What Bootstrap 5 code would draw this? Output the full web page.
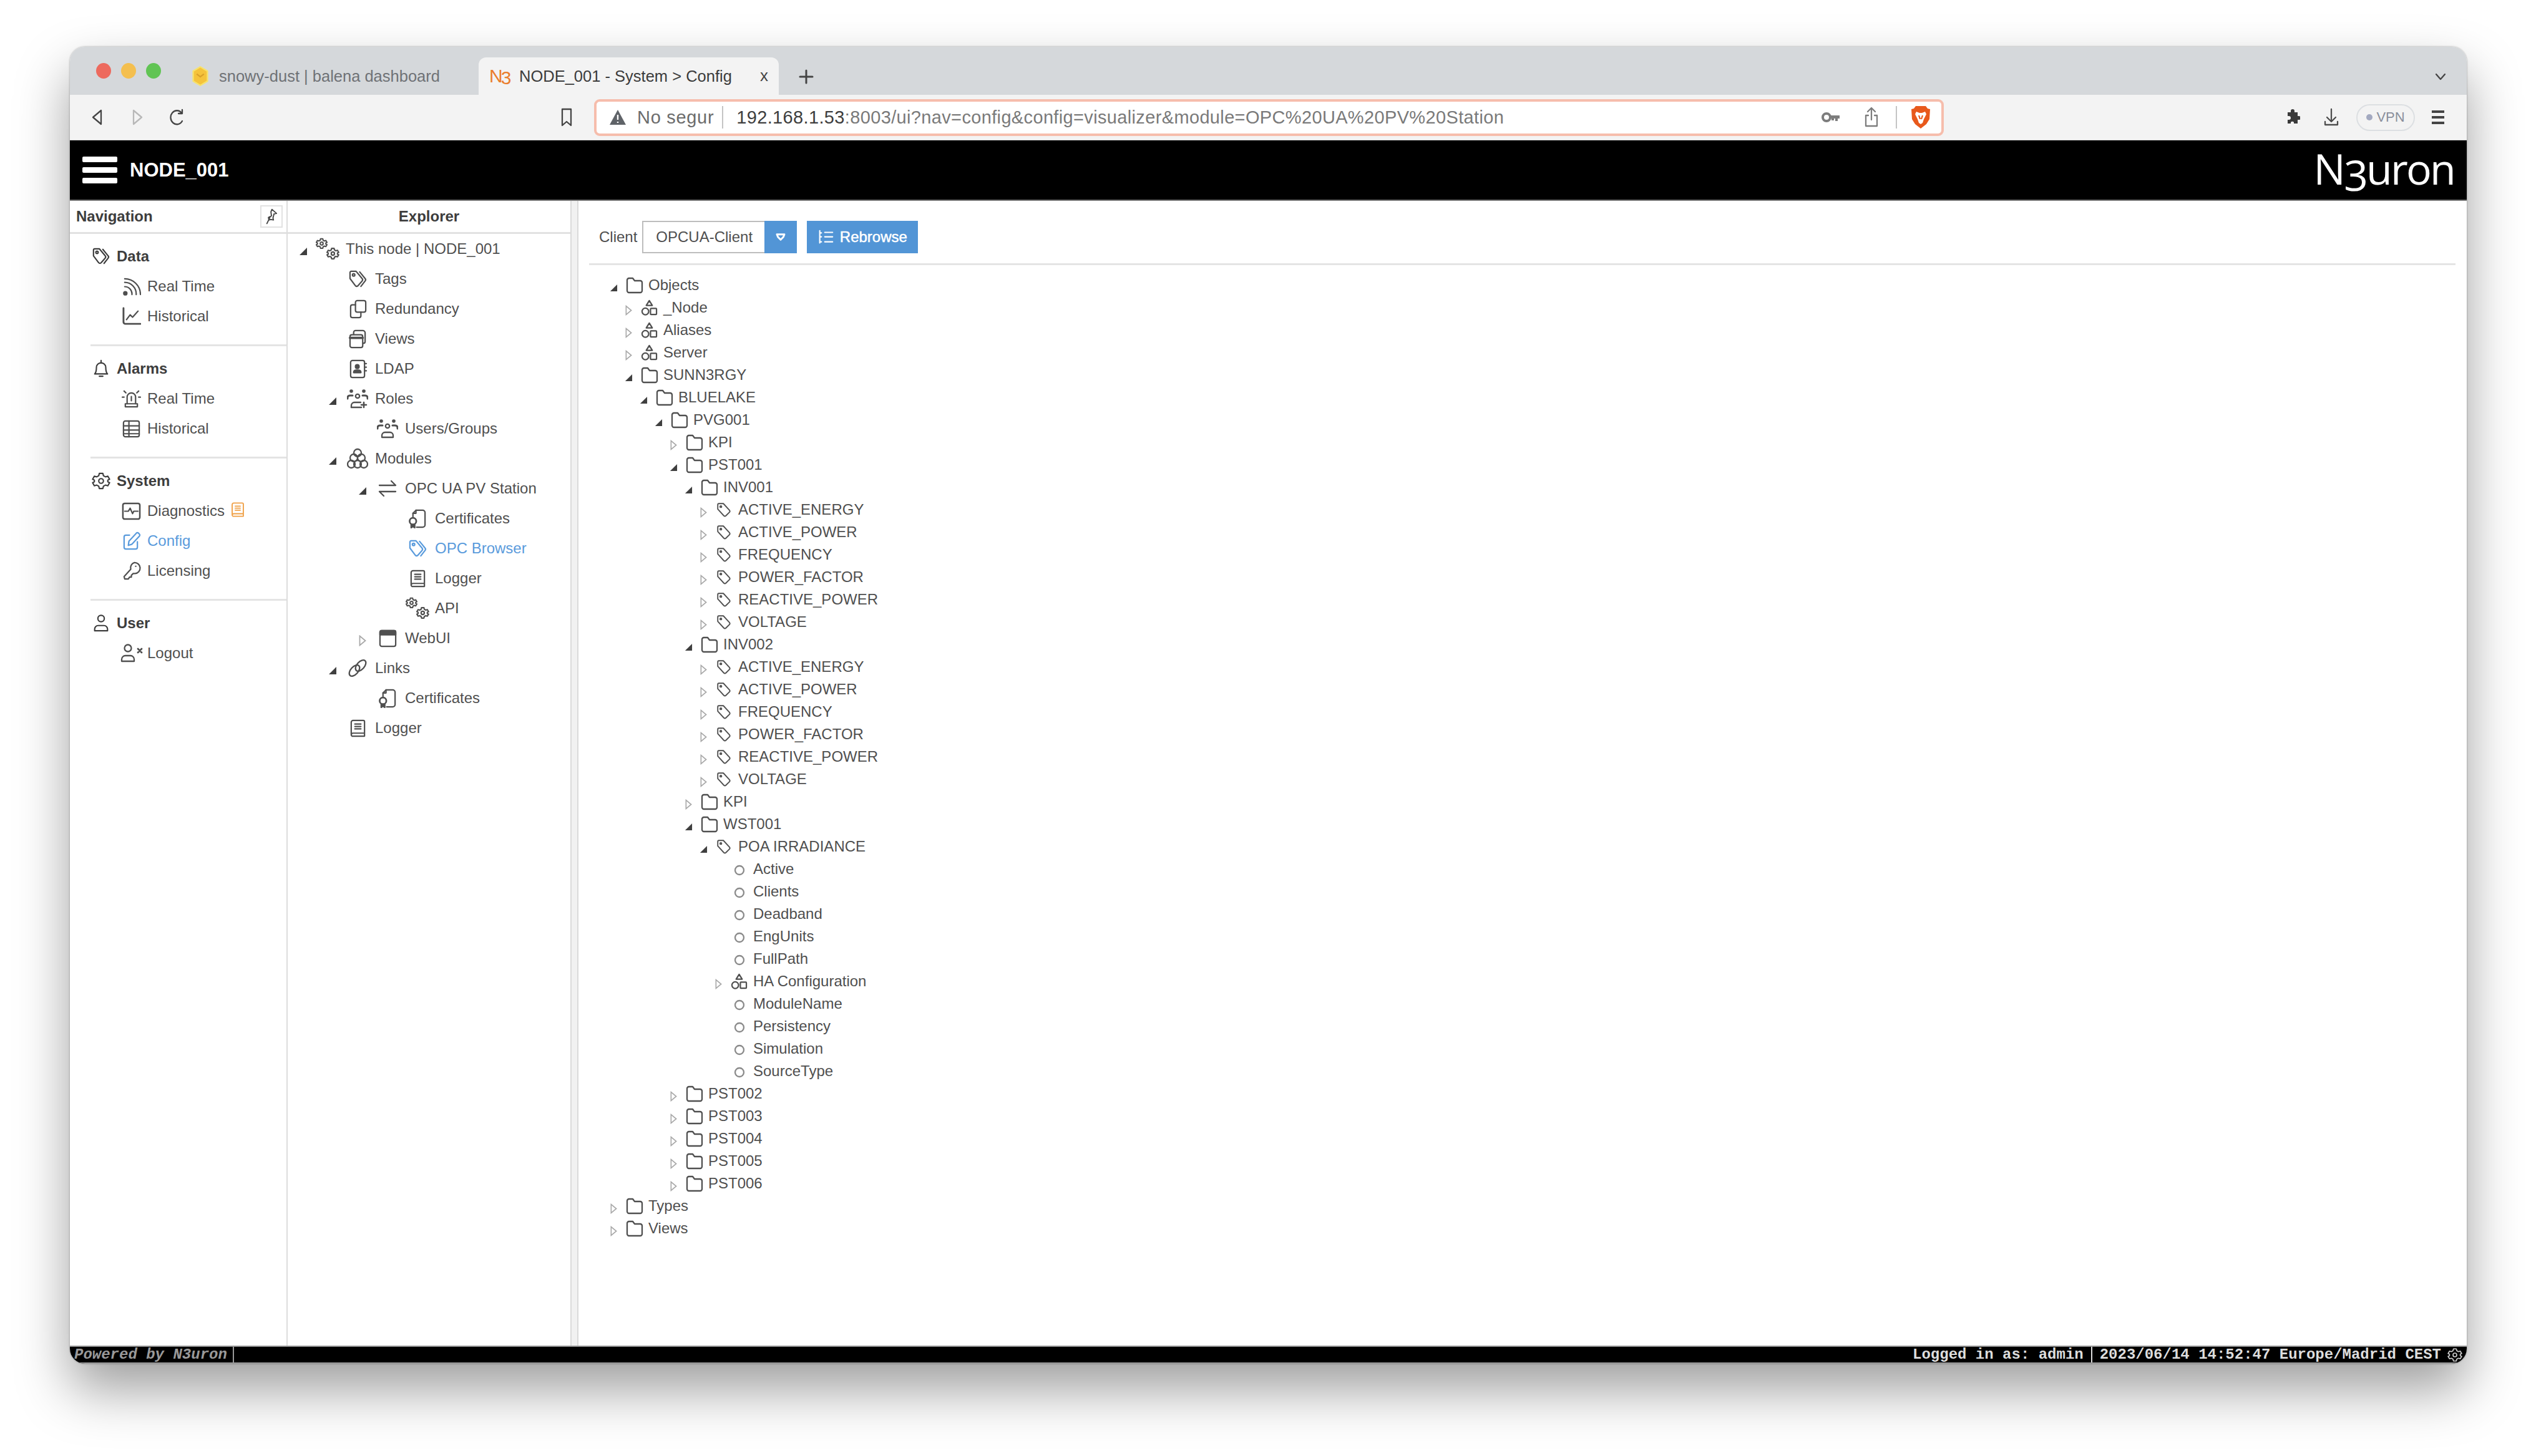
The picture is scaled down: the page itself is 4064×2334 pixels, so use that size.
<!DOCTYPE html>
<html lang="en">
<head>
<meta charset="utf-8">
<title>NODE_001 - System &gt; Config</title>
<link href="https://cdn.jsdelivr.net/npm/bootstrap@5.3.0/dist/css/bootstrap.min.css" rel="stylesheet">
<style>
html,body{height:100%;background:#fff;overflow:hidden}
body{font-family:"Liberation Sans",Arial,sans-serif;font-size:24px;color:#4f4f4f;line-height:1.2}
svg{display:block;flex:none}
.ic{fill:none;stroke:currentColor;stroke-width:2.3;stroke-linecap:round;stroke-linejoin:round}
.winbox{margin:75px 0 0 112px;width:3841px;height:2111px;border-radius:24px;overflow:hidden;background:#fff;box-shadow:0 42px 85px rgba(0,0,0,.38),0 0 3px rgba(0,0,0,.35)}
/* browser chrome */
.tabstrip{height:77px;background:#d5d8db}
.light{width:24px;height:25px;border-radius:50%}
.lights{margin:0 32px 0 42px;gap:16px;align-self:center}
.tabx{height:60px;font-size:25.5px}
.tab-off{width:477px;padding-left:17px;color:#6f7276}
.tab-on{width:481px;padding:0 17px;background:#f3f3f3;border-radius:12px 12px 0 0;color:#3c3c3c}
.fav3{width:31px;margin-right:17px;color:#ea7d2c;font-size:30px;letter-spacing:-3px;line-height:1}
.fav3 b{font-weight:400;position:relative;top:3px}
.tabclose{font-size:26px;color:#444}
.plusico{margin:18px 0 0 32px;align-self:center;color:#444}
.chev{margin:18px 33px 0 auto;align-self:center;color:#444}
.toolbar-row{height:73px;background:#f3f3f3;border-bottom:1px solid #dcdcdc}
.tbi{width:24px;color:#444}
.tb-back{margin-left:32px}.tb-fwd{margin-left:40px;color:#b8b8b8}.tb-rel{margin-left:40px}.tb-mark{margin-left:600px}
.urlbox{margin-left:32px;width:2163px;height:59px;border:4px solid #f6bdac;border-radius:9px;background:#fff;font-size:29px;padding-left:20px;padding-right:17px}
.nosec{color:#6c6c6c;margin-left:17px;font-size:29px;letter-spacing:.7px;padding-right:13px;border-right:2px solid #c4c4c4;line-height:36px}
.urltxt{margin-left:21px;color:#7a7a7a;letter-spacing:.35px}
.urltxt b{font-weight:400;color:#3e3e3e}
.urlend{margin-left:auto;color:#7d7d7d}
.u-share{margin-left:38px}.urlsep{width:2px;height:36px;background:#c4c4c4;margin:0 22px 0 27px}
.tb-puzzle{margin-left:547px;color:#3a3a3a}.tb-dl{margin-left:38px;color:#4d4d4d}
.vpnpill{margin-left:28px;width:94px;height:43px;border:2px solid #dcdfe2;border-radius:22px;font-size:22px;color:#8a8f9c;gap:6px}
.vpndot{width:10px;height:10px;background:#a3a9c0;border-radius:50%}
.tb-menu{margin-left:25px;color:#444}
/* app */
.topbar{height:97px;background:#000;color:#fff;border-bottom:2px solid #777;padding:0 20px 0 20px}
.burger{width:56px;gap:8px;margin-right:20px}
.burger i{display:block;height:9px;background:#fff;border-radius:2px}
.nodename{font-size:31px;font-weight:700}
.logotxt{margin-left:auto;font-family:"Open Sans",sans-serif;font-size:68px;font-weight:500;letter-spacing:-2.8px;line-height:1;padding-bottom:6px}
.logotxt b{font-weight:500;position:relative;top:10px}
.appbody{flex:1;min-height:0}
.navside{width:349px;border-right:2px solid #ddd}
.expside{width:453px}
.gutter{width:13px;background:#f1f1f1;border-left:2px solid #dadada;border-right:2px solid #dadada}
.panelhd{height:53px;border-bottom:3px solid #e2e2e2;font-weight:700;color:#3d3d3d;padding-left:10px}
.pinbtn{width:36px;height:36px;border:2px solid #e2e2e2;margin:0 6px 0 auto;color:#444}
.navgrp{padding:12px 0 21px 35px}
.navgrp+.navgrp{border-top:3px solid #e4e4e4;margin-left:33px;padding-left:2px}
.nrow{height:48px;gap:10px}
.nrow.ghead{font-weight:700;color:#3d3d3d}
.nrow.nsub{padding-left:48px}
.hl{color:#5a9bdc}
.bookmini{color:#f0a046;margin-left:-2px;margin-bottom:4px}
.logout-ico{margin-left:-3px;margin-right:-3px}
.erow{height:48px}
.l0{padding-left:13px}.l1{padding-left:60px}.l2{padding-left:108px}.l3{padding-left:156px}
.arw{width:24px;margin-right:8px}
.eico{width:40px;margin-right:8px}
.mainpane{min-width:0}
.clientbar{height:52px;margin:32px 18px 0 33px;gap:8px}
.selbox{width:248px;height:52px;border:2px solid #bdbdbd;border-right:0}
.selbox span{padding-left:20px}
.selbtn{width:52px;height:52px;margin-left:auto;margin-right:0;background:#5295d6;color:#fff}
.rebrowse{--bs-btn-bg:#5295d6;--bs-btn-border-color:#5295d6;--bs-btn-padding-x:0;--bs-btn-padding-y:0;--bs-btn-font-size:24px;--bs-btn-border-radius:0;--bs-btn-color:#fff;width:178px;height:52px;margin-left:8px;gap:10px;-webkit-text-stroke:.5px #fff}
.thr{height:0;border-top:3px solid #e4e4e4;margin:16px 18px 0 17px}
.mtree{padding:14px 0 0 44px}
.mrow{height:36px}
.m0{padding-left:0}.m1{padding-left:24px}.m2{padding-left:48px}.m3{padding-left:72px}.m4{padding-left:96px}.m5{padding-left:120px}.m6{padding-left:144px}.m7{padding-left:168px}
.marw{width:24px;margin-right:8px}
.mico{width:28px;margin-right:8px}
.mrow svg.tri,.erow svg.tri{margin-top:8px}
.tri{margin:auto}
.statusbar{height:29px;background:#000;border-top:2px solid #999;border-bottom:2px solid #999;font-family:"Liberation Mono","Courier New",monospace;font-size:24px;font-weight:700;color:#ddd;line-height:1;white-space:pre}
.st-pow{width:263px;padding-left:7px;font-style:italic;color:#999;border-right:2px solid #999;height:100%}
.st-log{margin-left:auto;padding-right:12px;border-right:2px solid #ddd;height:100%}
.st-date{padding-left:12px;height:100%}
.st-gear{margin:0 7px 0 10px;color:#ccc}
</style>
</head>
<body>
<svg width="0" height="0" class="position-absolute">
<defs>
<path id="gearp" d="M13 3h6l1 4 3.5 2 4-1.2 3 5.2-3 1.5v3l3 1.5-3 5.2-4-1.2-3.5 2-1 4h-6l-1-4-3.5-2-4 1.2-3-5.2 3-1.5v-3l-3-1.5 3-5.2 4 1.2 3.5-2z"/>
</defs>
<symbol id="i-tags" viewBox="0 0 32 32"><path d="M3 5a2 2 0 0 1 2-2h8l10 12a3 3 0 0 1 0 4l-7 8a3 3 0 0 1-4 0L3 15z"/><circle cx="9" cy="9" r="2"/><path d="M19 4l9 11a3 3 0 0 1 0 4l-7 9"/></symbol>
<symbol id="i-tag" viewBox="0 0 32 32"><path d="M4 6a2 2 0 0 1 2-2h9l12 13a3 3 0 0 1 0 4l-7 7a3 3 0 0 1-4 0L4 15z"/><circle cx="10" cy="10" r="1.6"/></symbol>
<symbol id="i-rss" viewBox="0 0 32 32"><circle cx="6" cy="27" r="2.6" fill="currentColor"/><path d="M5 16a12 12 0 0 1 12 13M5 9a19 19 0 0 1 19 20M5 3a26 26 0 0 1 26 26"/></symbol>
<symbol id="i-chart" viewBox="0 0 32 32"><path d="M3 2v23a3 3 0 0 0 3 3h25" stroke-width="3"/><path d="M8 21l6-8 4 4 9-10"/></symbol>
<symbol id="i-bell" viewBox="0 0 32 32"><path d="M5 25c2-2 3-5 3-11a8 8 0 0 1 16 0c0 6 1 9 3 11z"/><path d="M16 2v4M13 29h6"/></symbol>
<symbol id="i-siren" viewBox="0 0 32 32"><path d="M9 24V13a7 7 0 0 1 14 0v11"/><path d="M6 24h20v5H6z"/><path d="M16 12v7M1 13h3M28 13h3M4 3l3 3M28 3l-3 3"/></symbol>
<symbol id="i-table" viewBox="0 0 32 32"><rect x="3" y="3" width="26" height="26" rx="3"/><path d="M3 11h26M3 18h26M3 24h26M12 3v26"/></symbol>
<symbol id="i-gear" viewBox="0 0 32 32"><use href="#gearp"/><circle cx="16" cy="16" r="4"/></symbol>
<symbol id="i-gears" viewBox="0 0 40 38"><g transform="translate(0 0) scale(.62)"><use href="#gearp" stroke-width="3.6"/><circle cx="16" cy="16" r="4" stroke-width="3.6"/></g><g transform="translate(18 16) scale(.68)"><use href="#gearp" stroke-width="3.4"/><circle cx="16" cy="16" r="4" stroke-width="3.4"/></g></symbol>
<symbol id="i-pulse" viewBox="0 0 32 32"><rect x="2" y="3" width="28" height="26" rx="3" stroke-width="2.6"/><path d="M5 16h6l3-5 4 9 2-4h7"/></symbol>
<symbol id="i-edit" viewBox="0 0 32 32"><path d="M13 6H7a3 3 0 0 0-3 3v17a3 3 0 0 0 3 3h16a3 3 0 0 0 3-3V17"/><path d="M11 23l1-7L24 3a2.5 2.5 0 0 1 4 0l1 1a2.5 2.5 0 0 1 0 4L17 21z"/></symbol>
<symbol id="i-key" viewBox="0 0 32 32"><path d="M21 2a9 9 0 0 1 1 18l-3 0-3 3v3l-3 0-2 3H5l-1-4 11-12A9 9 0 0 1 21 2z"/><path d="M23 8h.5"/></symbol>
<symbol id="i-user" viewBox="0 0 32 32"><circle cx="16" cy="8" r="5.5"/><path d="M5 29v-3a6 6 0 0 1 6-6h10a6 6 0 0 1 6 6v3z"/></symbol>
<symbol id="i-logout" viewBox="0 0 37 32"><circle cx="13" cy="8" r="5.5"/><path d="M3 29v-3a6 6 0 0 1 6-6h8a6 6 0 0 1 6 6v3z"/><path d="M29 9l6 6M35 9l-6 6" stroke-width="2.8"/></symbol>
<symbol id="i-book" viewBox="0 0 32 32"><path d="M5 26V6a3 3 0 0 1 3-3h17a2 2 0 0 1 2 2v19H8a3 3 0 0 0-3 3 2.5 2.5 0 0 0 3 2h19v-6"/><path d="M11 9h10M11 13h10M11 17h10"/></symbol>
<symbol id="i-copy" viewBox="0 0 32 32"><rect x="12" y="2" width="17" height="19" rx="3"/><path d="M12 9H7a3 3 0 0 0-3 3v15a3 3 0 0 0 3 3h11a3 3 0 0 0 3-3v-6"/></symbol>
<symbol id="i-views" viewBox="0 0 32 32"><rect x="3" y="9" width="21" height="21" rx="3"/><path d="M3 14h21" stroke-width="4"/><path d="M9 8V5a3 3 0 0 1 3-3h12a4 4 0 0 1 4 4v14a3 3 0 0 1-3 3"/></symbol>
<symbol id="i-ldap" viewBox="0 0 32 32"><rect x="4" y="2" width="23" height="28" rx="3"/><circle cx="15" cy="12" r="3" fill="currentColor"/><path d="M9 22h12v-1a4 4 0 0 0-4-3h-4a4 4 0 0 0-4 3z" fill="currentColor"/><path d="M27 7h3M27 13h3M27 19h3"/></symbol>
<symbol id="i-roles" viewBox="0 0 34 32"><circle cx="7" cy="4" r="2.8" fill="currentColor" stroke="none"/><circle cx="27" cy="4" r="2.8" fill="currentColor" stroke="none"/><circle cx="17" cy="12" r="3.2"/><path d="M1 16v-2a4 4 0 0 1 4-3h4M33 16v-2a4 4 0 0 0-4-3h-4" stroke-width="3"/><path d="M7 30v-3a5 5 0 0 1 5-5h10"/><path d="M7 30h16M27 22v8M23 26h8" stroke-width="2.6"/></symbol>
<symbol id="i-users" viewBox="0 0 34 32"><circle cx="7" cy="4" r="2.8" fill="currentColor" stroke="none"/><circle cx="27" cy="4" r="2.8" fill="currentColor" stroke="none"/><circle cx="17" cy="12" r="3.2"/><path d="M1 16v-2a4 4 0 0 1 4-3h4M33 16v-2a4 4 0 0 0-4-3h-4" stroke-width="3"/><path d="M8 30v-3a5 5 0 0 1 5-5h8a5 5 0 0 1 5 5v3z"/></symbol>
<symbol id="i-modules" viewBox="0 0 34 34"><circle cx="17" cy="8" r="6"/><circle cx="11" cy="16" r="6"/><circle cx="23" cy="16" r="6"/><circle cx="7" cy="26" r="6"/><circle cx="17" cy="26" r="6"/><circle cx="27" cy="26" r="6"/></symbol>
<symbol id="i-swap" viewBox="0 0 32 32"><path d="M3 11h26l-7-7M29 21H3l7 7"/></symbol>
<symbol id="i-cert" viewBox="0 0 32 32"><path d="M8 13V7l5-5h11a4 4 0 0 1 4 4v20a4 4 0 0 1-4 4H14"/><path d="M13 2v5H8"/><circle cx="8" cy="20" r="5.5" stroke-width="2.8"/><path d="M5 25v6l3-2 3 2v-6" fill="currentColor"/></symbol>
<symbol id="i-window" viewBox="0 0 32 32"><rect x="3" y="3" width="26" height="26" rx="3"/><path d="M3 5a2 2 0 0 1 2-2h22a2 2 0 0 1 2 2v5H3z" fill="currentColor"/></symbol>
<symbol id="i-link" viewBox="0 0 34 32"><ellipse cx="12" cy="20" rx="10.5" ry="6" transform="rotate(-48 12 20)"/><ellipse cx="22" cy="12" rx="10.5" ry="6" transform="rotate(-48 22 12)"/></symbol>
<symbol id="i-folder" viewBox="0 0 28 28"><path d="M2 6a3 3 0 0 1 3-3h6l3 4h9a3 3 0 0 1 3 3v13a3 3 0 0 1-3 3H5a3 3 0 0 1-3-3z"/></symbol>
<symbol id="i-shapes" viewBox="0 0 28 28"><path d="M14 2l5 8H9z"/><circle cx="7.5" cy="20" r="5.5"/><rect x="16" y="15" width="10" height="10" rx="1"/></symbol>
<symbol id="i-pin" viewBox="0 0 24 32"><path d="M13 2l9 8-5 1-2 8 1 4-5-1-4 1-1-5 6-3-1-8z"/><path d="M9 18l-6 12"/></symbol>
<symbol id="i-list" viewBox="0 0 28 28"><path d="M3 2v22M3 6h3M3 13h3M3 22h3M12 5h14M12 13h14M12 22h14" stroke-width="2.4"/></symbol>
<symbol id="i-caret" viewBox="0 0 18 14"><path d="M2 2h14l-2 5-5 5-5-5z" stroke-width="3.4"/></symbol>
<symbol id="i-open" viewBox="0 0 14 14"><path d="M13 1v12H1z" fill="#3f3f3f"/></symbol>
<symbol id="i-closed" viewBox="0 0 12 18"><path d="M1.5 1.5v15l9-7.5z" fill="none" stroke="#a8a8a8" stroke-width="1.8"/></symbol>
</svg>

<div class="winbox d-flex flex-column">
  <div class="tabstrip d-flex align-items-end">
    <div class="lights d-flex">
      <span class="light" style="background:#ed6a5e"></span><span class="light" style="background:#f4bf4f"></span><span class="light" style="background:#61c454"></span>
    </div>
    <div class="tabx tab-off d-flex align-items-center">
      <svg width="28" height="32" viewBox="0 0 22 28" class="me-3"><path d="M11 1l10 6v14l-10 6-10-6V7z" fill="#f5c33b" stroke="#f7e26b" stroke-width="2"/><path d="M6 11l5 4 5-4" fill="none" stroke="#d9a12a" stroke-width="2"/></svg>
      <span class="text-nowrap">snowy-dust | balena dashboard</span>
    </div>
    <div class="tabx tab-on d-flex align-items-center">
      <span class="fav3">N<b>3</b></span>
      <span class="text-nowrap">NODE_001 - System &gt; Config</span>
      <span class="tabclose ms-auto">x</span>
    </div>
    <svg class="plusico ic" width="24" height="24" viewBox="0 0 24 24"><path d="M12 2v20M2 12h20" stroke-width="3"/></svg>
    <svg class="chev ic" width="18" height="12" viewBox="0 0 18 12"><path d="M2 2l7 8 7-8"/></svg>
  </div>

  <div class="toolbar-row d-flex align-items-center">
    <svg class="tbi tb-back ic" height="26" viewBox="0 0 24 26"><path d="M18 2v22L5 13z"/></svg>
    <svg class="tbi tb-fwd ic" height="26" viewBox="0 0 24 26"><path d="M6 2v22l13-11z"/></svg>
    <svg class="tbi tb-rel ic" height="28" viewBox="0 0 24 28"><path d="M20 20a10 11 0 1 1-1-13M20 2v6h-6"/></svg>
    <svg class="tbi tb-mark ic" height="30" viewBox="0 0 24 30"><path d="M5 2h14v26l-7-6-7 6z"/></svg>
    <div class="urlbox d-flex align-items-center">
      <svg width="28" height="26" viewBox="0 0 28 26"><path d="M14 1l13 24H1z" fill="#5f6368"/><path d="M14 9v8M14 20v2" stroke="#fff" stroke-width="2.4"/></svg>
      <span class="nosec text-nowrap">No segur</span>
      <span class="urltxt text-nowrap"><b>192.168.1.53</b>:8003/ui?nav=config&amp;config=visualizer&amp;module=OPC%20UA%20PV%20Station</span>
      <div class="urlend d-flex align-items-center">
        <svg width="30" height="18" viewBox="0 0 30 18"><circle cx="8" cy="9" r="6" fill="none" stroke="currentColor" stroke-width="4"/><path d="M13 6h16v5h-3v4h-4v-4h-2v3h-4v-3h-3z" fill="currentColor"/></svg>
        <svg class="ic u-share" width="24" height="32" viewBox="0 0 24 32"><path d="M12 1v19M6 7l6-6 6 6M7 13H3v17h18V13h-4"/></svg>
        <span class="urlsep"></span>
        <svg width="32" height="38" viewBox="0 0 32 38"><path d="M8 1h16l3 4 4 1-1 16-5 8-9 7-9-7-5-8L1 6l4-1z" fill="#e8591c"/><path d="M9 10l5 2h4l5-2 2 4-4 8-2 6-3 2-3-2-2-6-4-8z" fill="#fff"/><path d="M13 16l2 6M19 16l-2 6" stroke="#e8591c" stroke-width="2.2"/></svg>
      </div>
    </div>
    <svg class="tbi tb-puzzle" height="34" viewBox="0 0 24 26"><path d="M9 3a3 3 0 0 1 6 0v2h5v6h2a3 3 0 0 1 0 6h-2v6h-6v-2a3 3 0 0 0-5 0v2H4v-6h2a3 3 0 0 0 0-6H4V5h5z" fill="currentColor"/></svg>
    <svg class="tbi tb-dl ic" height="30" viewBox="0 0 24 30"><path d="M12 2v20M5 15l7 7 7-7M2 22v5h20v-5"/></svg>
    <div class="vpnpill d-flex align-items-center justify-content-center"><span class="vpndot"></span><span>VPN</span></div>
    <svg class="tbi tb-menu" height="24" viewBox="0 0 24 24"><path d="M2 3h20M2 12h20M2 21h20" stroke="currentColor" stroke-width="4"/></svg>
  </div>

  <nav class="topbar navbar flex-nowrap justify-content-start align-items-center">
    <div class="burger d-flex flex-column"><i></i><i></i><i></i></div>
    <span class="nodename">NODE_001</span>
    <span class="logotxt">N<b>3</b>uron</span>
  </nav>

  <div class="appbody d-flex">
    <aside class="navside">
      <div class="panelhd d-flex align-items-center">Navigation
        <span class="pinbtn d-flex align-items-center justify-content-center"><svg class="ic" width="20" height="26"><use href="#i-pin"/></svg></span>
      </div>
      <div class="navgrp">
        <div class="nrow ghead d-flex align-items-center"><svg class="ic" width="30" height="30"><use href="#i-tags"/></svg>Data</div>
        <div class="nrow nsub d-flex align-items-center"><svg class="ic" width="31" height="31"><use href="#i-rss"/></svg>Real Time</div>
        <div class="nrow nsub d-flex align-items-center"><svg class="ic" width="31" height="31"><use href="#i-chart"/></svg>Historical</div>
      </div>
      <div class="navgrp">
        <div class="nrow ghead d-flex align-items-center"><svg class="ic" width="30" height="30"><use href="#i-bell"/></svg>Alarms</div>
        <div class="nrow nsub d-flex align-items-center"><svg class="ic" width="31" height="31"><use href="#i-siren"/></svg>Real Time</div>
        <div class="nrow nsub d-flex align-items-center"><svg class="ic" width="31" height="31"><use href="#i-table"/></svg>Historical</div>
      </div>
      <div class="navgrp">
        <div class="nrow ghead d-flex align-items-center"><svg class="ic" width="30" height="30"><use href="#i-gear"/></svg>System</div>
        <div class="nrow nsub d-flex align-items-center"><svg class="ic" width="31" height="31"><use href="#i-pulse"/></svg>Diagnostics<svg class="ic bookmini" width="26" height="30"><use href="#i-book"/></svg></div>
        <div class="nrow nsub hl d-flex align-items-center"><svg class="ic" width="31" height="31"><use href="#i-edit"/></svg>Config</div>
        <div class="nrow nsub d-flex align-items-center"><svg class="ic" width="31" height="31"><use href="#i-key"/></svg>Licensing</div>
      </div>
      <div class="navgrp">
        <div class="nrow ghead d-flex align-items-center"><svg class="ic" width="30" height="30"><use href="#i-user"/></svg>User</div>
        <div class="nrow nsub d-flex align-items-center"><svg class="ic logout-ico" width="37" height="32"><use href="#i-logout"/></svg>Logout</div>
      </div>
    </aside>

    <aside class="expside">
      <div class="panelhd d-flex align-items-center justify-content-center p-0">Explorer</div>
      <div>
        <div class="erow l0 d-flex align-items-center"><span class="arw d-flex"><svg class="tri" width="14" height="14"><use href="#i-open"/></svg></span><span class="eico d-flex"><svg class="ic" width="38" height="36"><use href="#i-gears"/></svg></span>This node | NODE_001</div>
        <div class="erow l1 d-flex align-items-center"><span class="arw"></span><span class="eico d-flex justify-content-center"><svg class="ic" width="31" height="31"><use href="#i-tags"/></svg></span>Tags</div>
        <div class="erow l1 d-flex align-items-center"><span class="arw"></span><span class="eico d-flex justify-content-center"><svg class="ic" width="31" height="31"><use href="#i-copy"/></svg></span>Redundancy</div>
        <div class="erow l1 d-flex align-items-center"><span class="arw"></span><span class="eico d-flex justify-content-center"><svg class="ic" width="31" height="31"><use href="#i-views"/></svg></span>Views</div>
        <div class="erow l1 d-flex align-items-center"><span class="arw"></span><span class="eico d-flex justify-content-center"><svg class="ic" width="31" height="31"><use href="#i-ldap"/></svg></span>LDAP</div>
        <div class="erow l1 d-flex align-items-center"><span class="arw d-flex"><svg class="tri" width="14" height="14"><use href="#i-open"/></svg></span><span class="eico d-flex justify-content-center"><svg class="ic" width="34" height="32"><use href="#i-roles"/></svg></span>Roles</div>
        <div class="erow l2 d-flex align-items-center"><span class="arw"></span><span class="eico d-flex justify-content-center"><svg class="ic" width="34" height="32"><use href="#i-users"/></svg></span>Users/Groups</div>
        <div class="erow l1 d-flex align-items-center"><span class="arw d-flex"><svg class="tri" width="14" height="14"><use href="#i-open"/></svg></span><span class="eico d-flex justify-content-center"><svg class="ic" width="34" height="34"><use href="#i-modules"/></svg></span>Modules</div>
        <div class="erow l2 d-flex align-items-center"><span class="arw d-flex"><svg class="tri" width="14" height="14"><use href="#i-open"/></svg></span><span class="eico d-flex justify-content-center"><svg class="ic" width="32" height="32"><use href="#i-swap"/></svg></span>OPC UA PV Station</div>
        <div class="erow l3 d-flex align-items-center"><span class="arw"></span><span class="eico d-flex justify-content-center"><svg class="ic" width="31" height="31"><use href="#i-cert"/></svg></span>Certificates</div>
        <div class="erow l3 hl d-flex align-items-center"><span class="arw"></span><span class="eico d-flex justify-content-center"><svg class="ic" width="31" height="31"><use href="#i-tags"/></svg></span>OPC Browser</div>
        <div class="erow l3 d-flex align-items-center"><span class="arw"></span><span class="eico d-flex justify-content-center"><svg class="ic" width="31" height="31"><use href="#i-book"/></svg></span>Logger</div>
        <div class="erow l3 d-flex align-items-center"><span class="arw"></span><span class="eico d-flex justify-content-center"><svg class="ic" width="38" height="36"><use href="#i-gears"/></svg></span>API</div>
        <div class="erow l2 d-flex align-items-center"><span class="arw d-flex"><svg class="tri" width="12" height="18"><use href="#i-closed"/></svg></span><span class="eico d-flex justify-content-center"><svg class="ic" width="31" height="31"><use href="#i-window"/></svg></span>WebUI</div>
        <div class="erow l1 d-flex align-items-center"><span class="arw d-flex"><svg class="tri" width="14" height="14"><use href="#i-open"/></svg></span><span class="eico d-flex justify-content-center"><svg class="ic" width="34" height="32"><use href="#i-link"/></svg></span>Links</div>
        <div class="erow l2 d-flex align-items-center"><span class="arw"></span><span class="eico d-flex justify-content-center"><svg class="ic" width="31" height="31"><use href="#i-cert"/></svg></span>Certificates</div>
        <div class="erow l1 d-flex align-items-center"><span class="arw"></span><span class="eico d-flex justify-content-center"><svg class="ic" width="31" height="31"><use href="#i-book"/></svg></span>Logger</div>
      </div>
    </aside>
    <div class="gutter"></div>

    <main class="mainpane flex-grow-1">
      <div class="clientbar d-flex align-items-center">
        <span>Client</span>
        <div class="selbox d-flex align-items-center"><span>OPCUA-Client</span><span class="selbtn d-flex align-items-center justify-content-center p-0"><svg class="ic" width="16" height="12"><use href="#i-caret"/></svg></span></div>
        <button type="button" class="btn rebrowse d-flex align-items-center justify-content-center"><svg class="ic" width="25" height="25"><use href="#i-list"/></svg>Rebrowse</button>
      </div>
      <div class="thr"></div>
      <div class="mtree">
        <div class="mrow m0 d-flex align-items-center"><span class="marw d-flex"><svg class="tri" width="13" height="13"><use href="#i-open"/></svg></span><span class="mico d-flex"><svg class="ic" width="28" height="28"><use href="#i-folder"/></svg></span>Objects</div>
        <div class="mrow m1 d-flex align-items-center"><span class="marw d-flex"><svg class="tri" width="11" height="17"><use href="#i-closed"/></svg></span><span class="mico d-flex"><svg class="ic" width="27" height="27"><use href="#i-shapes"/></svg></span>_Node</div>
        <div class="mrow m1 d-flex align-items-center"><span class="marw d-flex"><svg class="tri" width="11" height="17"><use href="#i-closed"/></svg></span><span class="mico d-flex"><svg class="ic" width="27" height="27"><use href="#i-shapes"/></svg></span>Aliases</div>
        <div class="mrow m1 d-flex align-items-center"><span class="marw d-flex"><svg class="tri" width="11" height="17"><use href="#i-closed"/></svg></span><span class="mico d-flex"><svg class="ic" width="27" height="27"><use href="#i-shapes"/></svg></span>Server</div>
        <div class="mrow m1 d-flex align-items-center"><span class="marw d-flex"><svg class="tri" width="13" height="13"><use href="#i-open"/></svg></span><span class="mico d-flex"><svg class="ic" width="28" height="28"><use href="#i-folder"/></svg></span>SUNN3RGY</div>
        <div class="mrow m2 d-flex align-items-center"><span class="marw d-flex"><svg class="tri" width="13" height="13"><use href="#i-open"/></svg></span><span class="mico d-flex"><svg class="ic" width="28" height="28"><use href="#i-folder"/></svg></span>BLUELAKE</div>
        <div class="mrow m3 d-flex align-items-center"><span class="marw d-flex"><svg class="tri" width="13" height="13"><use href="#i-open"/></svg></span><span class="mico d-flex"><svg class="ic" width="28" height="28"><use href="#i-folder"/></svg></span>PVG001</div>
        <div class="mrow m4 d-flex align-items-center"><span class="marw d-flex"><svg class="tri" width="11" height="17"><use href="#i-closed"/></svg></span><span class="mico d-flex"><svg class="ic" width="28" height="28"><use href="#i-folder"/></svg></span>KPI</div>
        <div class="mrow m4 d-flex align-items-center"><span class="marw d-flex"><svg class="tri" width="13" height="13"><use href="#i-open"/></svg></span><span class="mico d-flex"><svg class="ic" width="28" height="28"><use href="#i-folder"/></svg></span>PST001</div>
        <div class="mrow m5 d-flex align-items-center"><span class="marw d-flex"><svg class="tri" width="13" height="13"><use href="#i-open"/></svg></span><span class="mico d-flex"><svg class="ic" width="28" height="28"><use href="#i-folder"/></svg></span>INV001</div>
        <div class="mrow m6 d-flex align-items-center"><span class="marw d-flex"><svg class="tri" width="11" height="17"><use href="#i-closed"/></svg></span><span class="mico d-flex"><svg class="ic" width="26" height="26"><use href="#i-tag"/></svg></span>ACTIVE_ENERGY</div>
        <div class="mrow m6 d-flex align-items-center"><span class="marw d-flex"><svg class="tri" width="11" height="17"><use href="#i-closed"/></svg></span><span class="mico d-flex"><svg class="ic" width="26" height="26"><use href="#i-tag"/></svg></span>ACTIVE_POWER</div>
        <div class="mrow m6 d-flex align-items-center"><span class="marw d-flex"><svg class="tri" width="11" height="17"><use href="#i-closed"/></svg></span><span class="mico d-flex"><svg class="ic" width="26" height="26"><use href="#i-tag"/></svg></span>FREQUENCY</div>
        <div class="mrow m6 d-flex align-items-center"><span class="marw d-flex"><svg class="tri" width="11" height="17"><use href="#i-closed"/></svg></span><span class="mico d-flex"><svg class="ic" width="26" height="26"><use href="#i-tag"/></svg></span>POWER_FACTOR</div>
        <div class="mrow m6 d-flex align-items-center"><span class="marw d-flex"><svg class="tri" width="11" height="17"><use href="#i-closed"/></svg></span><span class="mico d-flex"><svg class="ic" width="26" height="26"><use href="#i-tag"/></svg></span>REACTIVE_POWER</div>
        <div class="mrow m6 d-flex align-items-center"><span class="marw d-flex"><svg class="tri" width="11" height="17"><use href="#i-closed"/></svg></span><span class="mico d-flex"><svg class="ic" width="26" height="26"><use href="#i-tag"/></svg></span>VOLTAGE</div>
        <div class="mrow m5 d-flex align-items-center"><span class="marw d-flex"><svg class="tri" width="13" height="13"><use href="#i-open"/></svg></span><span class="mico d-flex"><svg class="ic" width="28" height="28"><use href="#i-folder"/></svg></span>INV002</div>
        <div class="mrow m6 d-flex align-items-center"><span class="marw d-flex"><svg class="tri" width="11" height="17"><use href="#i-closed"/></svg></span><span class="mico d-flex"><svg class="ic" width="26" height="26"><use href="#i-tag"/></svg></span>ACTIVE_ENERGY</div>
        <div class="mrow m6 d-flex align-items-center"><span class="marw d-flex"><svg class="tri" width="11" height="17"><use href="#i-closed"/></svg></span><span class="mico d-flex"><svg class="ic" width="26" height="26"><use href="#i-tag"/></svg></span>ACTIVE_POWER</div>
        <div class="mrow m6 d-flex align-items-center"><span class="marw d-flex"><svg class="tri" width="11" height="17"><use href="#i-closed"/></svg></span><span class="mico d-flex"><svg class="ic" width="26" height="26"><use href="#i-tag"/></svg></span>FREQUENCY</div>
        <div class="mrow m6 d-flex align-items-center"><span class="marw d-flex"><svg class="tri" width="11" height="17"><use href="#i-closed"/></svg></span><span class="mico d-flex"><svg class="ic" width="26" height="26"><use href="#i-tag"/></svg></span>POWER_FACTOR</div>
        <div class="mrow m6 d-flex align-items-center"><span class="marw d-flex"><svg class="tri" width="11" height="17"><use href="#i-closed"/></svg></span><span class="mico d-flex"><svg class="ic" width="26" height="26"><use href="#i-tag"/></svg></span>REACTIVE_POWER</div>
        <div class="mrow m6 d-flex align-items-center"><span class="marw d-flex"><svg class="tri" width="11" height="17"><use href="#i-closed"/></svg></span><span class="mico d-flex"><svg class="ic" width="26" height="26"><use href="#i-tag"/></svg></span>VOLTAGE</div>
        <div class="mrow m5 d-flex align-items-center"><span class="marw d-flex"><svg class="tri" width="11" height="17"><use href="#i-closed"/></svg></span><span class="mico d-flex"><svg class="ic" width="28" height="28"><use href="#i-folder"/></svg></span>KPI</div>
        <div class="mrow m5 d-flex align-items-center"><span class="marw d-flex"><svg class="tri" width="13" height="13"><use href="#i-open"/></svg></span><span class="mico d-flex"><svg class="ic" width="28" height="28"><use href="#i-folder"/></svg></span>WST001</div>
        <div class="mrow m6 d-flex align-items-center"><span class="marw d-flex"><svg class="tri" width="13" height="13"><use href="#i-open"/></svg></span><span class="mico d-flex"><svg class="ic" width="26" height="26"><use href="#i-tag"/></svg></span>POA IRRADIANCE</div>
        <div class="mrow m7 d-flex align-items-center"><span class="marw"></span><span class="mico d-flex"><svg class="ic" width="28" height="28" viewBox="0 0 28 28" color="#8a8a8a"><circle cx="14" cy="16" r="7"/></svg></span>Active</div>
        <div class="mrow m7 d-flex align-items-center"><span class="marw"></span><span class="mico d-flex"><svg class="ic" width="28" height="28" viewBox="0 0 28 28" color="#8a8a8a"><circle cx="14" cy="16" r="7"/></svg></span>Clients</div>
        <div class="mrow m7 d-flex align-items-center"><span class="marw"></span><span class="mico d-flex"><svg class="ic" width="28" height="28" viewBox="0 0 28 28" color="#8a8a8a"><circle cx="14" cy="16" r="7"/></svg></span>Deadband</div>
        <div class="mrow m7 d-flex align-items-center"><span class="marw"></span><span class="mico d-flex"><svg class="ic" width="28" height="28" viewBox="0 0 28 28" color="#8a8a8a"><circle cx="14" cy="16" r="7"/></svg></span>EngUnits</div>
        <div class="mrow m7 d-flex align-items-center"><span class="marw"></span><span class="mico d-flex"><svg class="ic" width="28" height="28" viewBox="0 0 28 28" color="#8a8a8a"><circle cx="14" cy="16" r="7"/></svg></span>FullPath</div>
        <div class="mrow m7 d-flex align-items-center"><span class="marw d-flex"><svg class="tri" width="11" height="17"><use href="#i-closed"/></svg></span><span class="mico d-flex"><svg class="ic" width="27" height="27"><use href="#i-shapes"/></svg></span>HA Configuration</div>
        <div class="mrow m7 d-flex align-items-center"><span class="marw"></span><span class="mico d-flex"><svg class="ic" width="28" height="28" viewBox="0 0 28 28" color="#8a8a8a"><circle cx="14" cy="16" r="7"/></svg></span>ModuleName</div>
        <div class="mrow m7 d-flex align-items-center"><span class="marw"></span><span class="mico d-flex"><svg class="ic" width="28" height="28" viewBox="0 0 28 28" color="#8a8a8a"><circle cx="14" cy="16" r="7"/></svg></span>Persistency</div>
        <div class="mrow m7 d-flex align-items-center"><span class="marw"></span><span class="mico d-flex"><svg class="ic" width="28" height="28" viewBox="0 0 28 28" color="#8a8a8a"><circle cx="14" cy="16" r="7"/></svg></span>Simulation</div>
        <div class="mrow m7 d-flex align-items-center"><span class="marw"></span><span class="mico d-flex"><svg class="ic" width="28" height="28" viewBox="0 0 28 28" color="#8a8a8a"><circle cx="14" cy="16" r="7"/></svg></span>SourceType</div>
        <div class="mrow m4 d-flex align-items-center"><span class="marw d-flex"><svg class="tri" width="11" height="17"><use href="#i-closed"/></svg></span><span class="mico d-flex"><svg class="ic" width="28" height="28"><use href="#i-folder"/></svg></span>PST002</div>
        <div class="mrow m4 d-flex align-items-center"><span class="marw d-flex"><svg class="tri" width="11" height="17"><use href="#i-closed"/></svg></span><span class="mico d-flex"><svg class="ic" width="28" height="28"><use href="#i-folder"/></svg></span>PST003</div>
        <div class="mrow m4 d-flex align-items-center"><span class="marw d-flex"><svg class="tri" width="11" height="17"><use href="#i-closed"/></svg></span><span class="mico d-flex"><svg class="ic" width="28" height="28"><use href="#i-folder"/></svg></span>PST004</div>
        <div class="mrow m4 d-flex align-items-center"><span class="marw d-flex"><svg class="tri" width="11" height="17"><use href="#i-closed"/></svg></span><span class="mico d-flex"><svg class="ic" width="28" height="28"><use href="#i-folder"/></svg></span>PST005</div>
        <div class="mrow m4 d-flex align-items-center"><span class="marw d-flex"><svg class="tri" width="11" height="17"><use href="#i-closed"/></svg></span><span class="mico d-flex"><svg class="ic" width="28" height="28"><use href="#i-folder"/></svg></span>PST006</div>
        <div class="mrow m0 d-flex align-items-center"><span class="marw d-flex"><svg class="tri" width="11" height="17"><use href="#i-closed"/></svg></span><span class="mico d-flex"><svg class="ic" width="28" height="28"><use href="#i-folder"/></svg></span>Types</div>
        <div class="mrow m0 d-flex align-items-center"><span class="marw d-flex"><svg class="tri" width="11" height="17"><use href="#i-closed"/></svg></span><span class="mico d-flex"><svg class="ic" width="28" height="28"><use href="#i-folder"/></svg></span>Views</div>
      </div>
    </main>
  </div>

  <footer class="statusbar d-flex align-items-center">
    <span class="st-pow d-flex align-items-center">Powered by N3uron</span>
    <span class="st-log d-flex align-items-center">Logged in as: admin</span>
    <span class="st-date d-flex align-items-center">2023/06/14 14:52:47 Europe/Madrid CEST</span>
    <svg class="st-gear ic" width="24" height="24"><use href="#i-gear"/></svg>
  </footer>
</div>
<script src="https://cdn.jsdelivr.net/npm/bootstrap@5.3.0/dist/js/bootstrap.bundle.min.js"></script>
</body>
</html>
